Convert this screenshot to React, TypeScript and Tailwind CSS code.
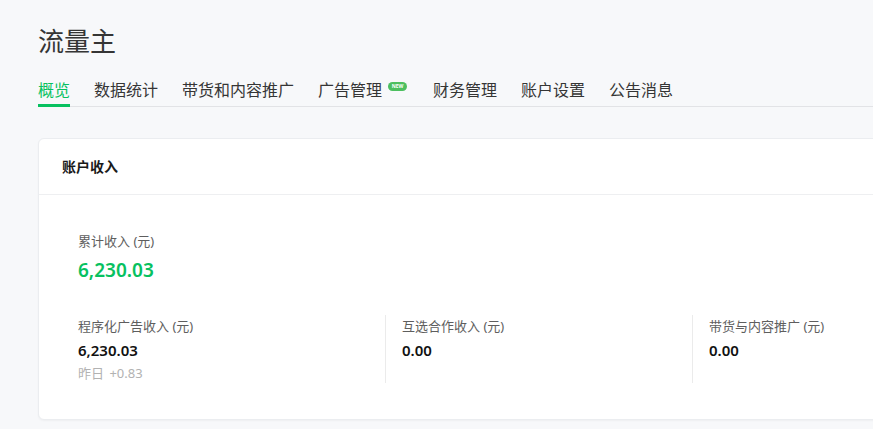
const tabs = ['概览', '数据统计', '带货和内容推广', '广告管理', '财务管理', '账户设置', '公告消息']

const font = { fontFamily: '"Noto Sans", "Noto Sans CJK SC", sans-serif' }

const App = () => {
  return (
    <div className="min-h-screen w-full overflow-hidden bg-[#f7f8fa]" style={font}>
      <div className="w-[1200px] pl-[38px] pt-[23px]">
        <h1 className="text-[26px] leading-[36px] text-[#353535]">流量主</h1>

        {/* tabs */}
        <div className="mt-[19px] flex border-b border-[#e2e3e6]">
          {tabs.map((tab, i) => (
            <div
              key={tab}
              className={
                i === 0
                  ? '-mb-px mr-[24px] flex items-start border-b-[3px] border-[#07c160] pb-[2px] text-[16px] leading-[24px] text-[#07c160]'
                  : '-mb-px mr-[24px] flex items-start border-b-[3px] border-transparent pb-[2px] text-[16px] leading-[24px] text-[#353535]'
              }
            >
              {tab}
              {tab === '广告管理' && (
                <span className="ml-[6px] mr-[2px] mt-[4px] flex h-[9px] w-[19px] items-center justify-center rounded-full bg-[#4cbf5f] text-[5px] font-bold leading-none text-white">
                  NEW
                </span>
              )}
            </div>
          ))}
        </div>

        {/* card */}
        <div className="mt-[31px] rounded-[6px] border border-[#ebedf0] bg-white shadow-[0_1px_2px_rgba(0,0,0,0.04)]">
          <div className="flex h-[56px] items-center border-b border-[#eeeff1] px-[23px] text-[14px] font-bold text-[#1a1a1a]">
            账户收入
          </div>
          <div className="pb-[36px] pl-[39px] pt-[36px]">
            <div className="text-[13px] leading-[20px] text-[#5e5e5e]">累计收入 (元)</div>
            <div className="mt-[5px] text-[19px] font-semibold leading-[28px] text-[#07c160]">6,230.03</div>

            <div className="mt-[31px] flex">
              <div className="h-[68px] w-[307px]">
                <div className="pt-[1px] text-[13px] leading-[20px] text-[#5e5e5e]">程序化广告收入 (元)</div>
                <div className="mt-[3px] text-[15px] font-semibold leading-[22px] text-[#111]">6,230.03</div>
                <div className="mt-[2px] text-[13px] leading-[20px] text-[#b2b2b2]">
                  昨日 <span className="ml-[2px]">+0.83</span>
                </div>
              </div>
              <div className="h-[68px] w-[307px] border-l border-[#ebebeb] pl-[16px]">
                <div className="pt-[1px] text-[13px] leading-[20px] text-[#5e5e5e]">互选合作收入 (元)</div>
                <div className="mt-[3px] text-[15px] font-semibold leading-[22px] text-[#111]">0.00</div>
              </div>
              <div className="h-[68px] w-[307px] border-l border-[#ebebeb] pl-[16px]">
                <div className="pt-[1px] text-[13px] leading-[20px] text-[#5e5e5e]">带货与内容推广 (元)</div>
                <div className="mt-[3px] text-[15px] font-semibold leading-[22px] text-[#111]">0.00</div>
              </div>
            </div>
          </div>
        </div>
      </div>
    </div>
  )
}

export default App
